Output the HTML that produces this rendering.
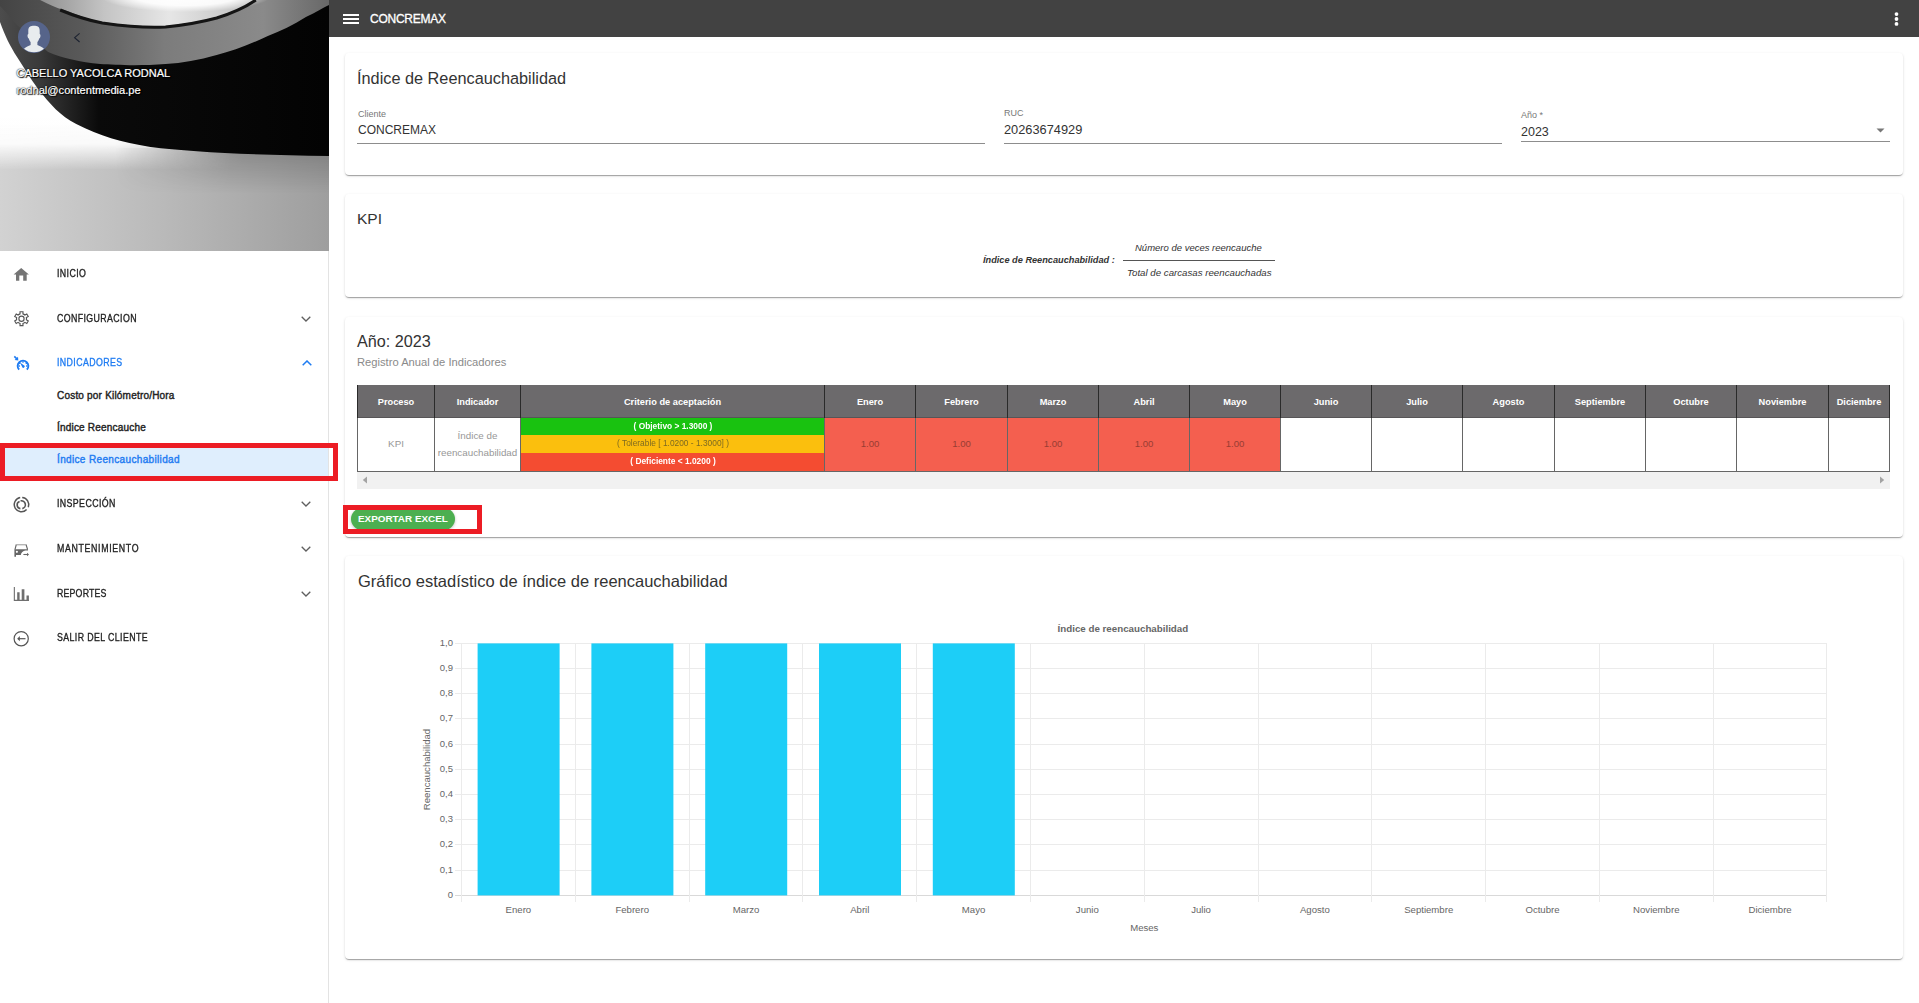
<!DOCTYPE html>
<html><head><meta charset="utf-8">
<style>
*{margin:0;padding:0;box-sizing:border-box}
html,body{width:1919px;height:1003px;overflow:hidden;background:#fff;font-family:"Liberation Sans",sans-serif;color:rgba(0,0,0,.87)}
.a{position:absolute}
.t{position:absolute;white-space:nowrap;line-height:1}
#side{position:absolute;left:0;top:0;width:329px;height:1003px;background:#fff;border-right:1px solid #e3e3e3}
#top{position:absolute;left:329px;top:0;width:1590px;height:37px;background:#424242}
.card{position:absolute;left:345px;width:1558px;background:#fff;border-radius:4px;box-shadow:0 2px 1px -1px rgba(0,0,0,.2),0 1px 1px 0 rgba(0,0,0,.14),0 1px 3px 0 rgba(0,0,0,.12)}
.menu{font-size:10px;color:#222;-webkit-text-stroke:.32px #222;letter-spacing:.45px;transform:scaleX(.88);transform-origin:0 0}
.sub{font-size:10px;color:#222;-webkit-text-stroke:.4px #222;letter-spacing:.2px}
.ico{position:absolute;left:13px;width:17px;height:17px}
.th{font-size:9.25px;font-weight:bold;color:#fff;text-align:center}
.td{font-size:9.8px;color:#979797;text-align:center}
.cr{font-size:9px;text-align:center;transform:scaleX(.93)}
.tv{font-size:9.6px;color:#983d33;text-align:center}
.chev{position:absolute;left:301px;width:10px;height:6px}
</style></head><body>
<div id="side">
  
<svg class="a" style="left:0;top:0" width="329" height="251" viewBox="0 0 328 251" preserveAspectRatio="none">
<defs>
<linearGradient id="fl" x1="0" y1="0" x2="1" y2="0"><stop offset="0" stop-color="#d2d2d2"/><stop offset=".5" stop-color="#b9b9b9"/><stop offset="1" stop-color="#9e9e9e"/></linearGradient>
<linearGradient id="fw" x1="0" y1="0" x2="0" y2="1"><stop offset="0" stop-color="#fff" stop-opacity="1"/><stop offset=".5" stop-color="#fff" stop-opacity=".9"/><stop offset="1" stop-color="#fff" stop-opacity="0"/></linearGradient>
<linearGradient id="fh" x1="0" y1="0" x2="1" y2="0"><stop offset="0" stop-color="#fff"/><stop offset=".35" stop-color="#fff"/><stop offset=".75" stop-color="#000"/></linearGradient>
<mask id="mk"><rect x="0" y="0" width="328" height="251" fill="url(#fh)"/></mask>
<linearGradient id="hz" x1="0" y1="0" x2="0" y2="1"><stop offset="0" stop-color="#000" stop-opacity=".2"/><stop offset="1" stop-color="#000" stop-opacity="0"/></linearGradient>
<linearGradient id="hzm" x1="0" y1="0" x2="1" y2="0"><stop offset="0" stop-color="#000"/><stop offset=".35" stop-color="#000"/><stop offset=".7" stop-color="#fff"/></linearGradient>
<mask id="mk2"><rect x="0" y="0" width="328" height="251" fill="url(#hzm)"/></mask>
<linearGradient id="rim" x1="0" y1="0" x2="1" y2="0"><stop offset="0" stop-color="#909090"/><stop offset=".3" stop-color="#c4c4c4"/><stop offset=".6" stop-color="#e6e6e6"/><stop offset="1" stop-color="#bdbdbd"/></linearGradient>
<linearGradient id="sw" x1="0" y1="0" x2="1" y2="0"><stop offset="0" stop-color="#444"/><stop offset=".25" stop-color="#595959"/><stop offset=".5" stop-color="#7c7c7c"/><stop offset=".8" stop-color="#8a8a8a"/><stop offset="1" stop-color="#686868"/></linearGradient>
<radialGradient id="hl"><stop offset="0" stop-color="#fff"/><stop offset=".6" stop-color="#fff" stop-opacity=".9"/><stop offset="1" stop-color="#fff" stop-opacity="0"/></radialGradient>
<linearGradient id="tr" x1="0" y1="0" x2="1" y2="0"><stop offset="0" stop-color="#4c4c4c"/><stop offset=".12" stop-color="#3a3a3a"/><stop offset=".3" stop-color="#0a0a0a"/><stop offset="1" stop-color="#030303"/></linearGradient>
</defs>
<rect x="0" y="0" width="328" height="251" fill="#fff"/>
<rect x="0" y="125" width="328" height="126" fill="url(#fl)"/>
<rect x="0" y="118" width="328" height="52" fill="url(#fw)" mask="url(#mk)"/>
<rect x="0" y="148" width="328" height="45" fill="url(#hz)" mask="url(#mk2)"/>
<!-- tire body -->
<path d="M0 22 C5 36 10 46 17 57 C24 68 30 78 38 89 C50 104 60 116 76 124 C100 136 120 142 150 147 C190 152 250 155 328 156 L328 0 L0 0 Z" fill="url(#tr)"/>
<!-- sidewall -->
<path d="M0 0 L328 0 L328 5 C318 10 312 14 305 17 C292 25 280 31 267 36 C248 45 232 51 216 55 C198 60 182 63 165 64 C140 66 115 65 100 64 C80 62 62 58 48 52 C36 42 24 32 16 24 C10 17 5 11 0 6 Z" fill="url(#sw)"/>
<!-- rim interior light -->
<path d="M40 0 C48 4 56 8 64 10 C78 15 90 20 102 22 C130 26 150 27 165 26 C185 24 205 20 216 17 C232 12 245 6 254 0 Z" fill="url(#rim)"/>
<ellipse cx="185" cy="-4" rx="85" ry="16" fill="url(#hl)"/>
<!-- rim dark line -->
<path d="M60 10 C72 15 86 20 102 23 C130 27 150 28 165 27 C185 25 205 21 216 18 C232 13 245 7 255 0" fill="none" stroke="#151515" stroke-width="3"/>
</svg>
<!--HEADER-->
  <svg class="a" style="left:18px;top:21px" width="32" height="32" viewBox="0 0 32 32"><circle cx="16" cy="16" r="16" fill="#56648a"/><path d="M16 4.8C12.5 4.8 10.3 5.8 10.3 9.5V13C9.6 13.2 9.4 14 9.6 15.5 9.8 16.8 10.3 17.3 10.8 17.4 11.3 19 12 20.5 12.6 21V24C10.5 25 8 26 6 27.8A16 16 0 0 0 26 27.8C24 26 21.5 25 19.4 24V21C20 20.5 20.7 19 21.2 17.4 21.7 17.3 22.2 16.8 22.4 15.5 22.6 14 22.4 13.2 21.7 13V9.5C21.7 5.8 19.5 4.8 16 4.8Z" fill="#e8ecee"/></svg>
<svg class="a" style="left:73px;top:33px" width="8" height="10" viewBox="0 0 8 10"><path d="M6.6 .4L1.6 4.7 6.6 9" fill="none" stroke="#1c2230" stroke-width="1.1"/></svg>
<div class="t" style="left:16.5px;top:68px;font-size:11px;color:#fff;-webkit-text-stroke:.2px #fff;text-shadow:0 0 1.5px #000,0 0 1px #000,1px 1px 1px #000">CABELLO YACOLCA RODNAL</div>
<div class="t" style="left:16.5px;top:85px;font-size:11.1px;color:#fff;-webkit-text-stroke:.2px #fff;text-shadow:0 0 1.5px #000,0 0 1px #000,1px 1px 1px #000">rodnal@contentmedia.pe</div>

<svg class="a" style="left:10px;top:262px" width="24" height="24" viewBox="0 0 24 24"><path d="M3.6 12.4L11.2 6l7.7 6.4h-2.2v6.3h-3.5v-5.3H9.3v5.3H6v-6.3z" fill="#757575"/></svg>
<div class="t menu" style="left:57px;top:269px">INICIO</div>

<svg class="a" style="left:10px;top:307px" width="24" height="24" viewBox="0 0 24 24"><path d="M10.04 6.92 L10.02 4.76 L12.98 4.76 L12.96 6.92 A5.00 5.00 0 0 1 14.91 8.04 L16.78 6.95 L18.25 9.51 L16.37 10.58 A5.00 5.00 0 0 1 16.37 12.82 L18.25 13.89 L16.78 16.45 L14.91 15.36 A5.00 5.00 0 0 1 12.96 16.48 L12.98 18.64 L10.02 18.64 L10.04 16.48 A5.00 5.00 0 0 1 8.09 15.36 L6.22 16.45 L4.75 13.89 L6.63 12.82 A5.00 5.00 0 0 1 6.63 10.58 L4.75 9.51 L6.22 6.95 L8.09 8.04 A5.00 5.00 0 0 1 10.04 6.92 Z" fill="none" stroke="#555" stroke-width="1.15" stroke-linejoin="miter"/><circle cx="11.5" cy="11.7" r="2.6" fill="none" stroke="#555" stroke-width="1.15"/></svg>
<div class="t menu" style="left:57px;top:314px">CONFIGURACION</div>
<svg class="chev" style="top:316px" viewBox="0 0 10 6"><path d="M.7 .7L5 5 9.3 .7" fill="none" stroke="#5f5f5f" stroke-width="1.3"/></svg>

<svg class="a" style="left:10px;top:350px" width="24" height="24" viewBox="0 0 24 24"><path d="M9.1 19.6A5.3 5.3 0 1 1 16.9 19.6" fill="none" stroke="#1f7cf2" stroke-width="2"/><path d="M13 11.2v1.6M9.2 12.9l1 1M16.8 12.9l-1 1M8.4 16h1.5M17.6 16h-1.5" stroke="#1f7cf2" stroke-width="1.3"/><path d="M10 12.6L13.8 15.2A1.3 1.3 0 1 1 12.2 17z" fill="#1f7cf2"/><path d="M4.3 6.4L7.4 9.4" stroke="#1f7cf2" stroke-width="1.6"/><path d="M8.3 10.4L4.6 10l3.4-3.3z" fill="#1f7cf2"/></svg>
<div class="t menu" style="left:57px;top:358px;color:#1f7cf2;-webkit-text-stroke-color:#1f7cf2">INDICADORES</div>
<svg class="chev" style="top:360px;left:302px" viewBox="0 0 10 6"><path d="M.7 5.3L5 1 9.3 5.3" fill="none" stroke="#1f7cf2" stroke-width="1.5"/></svg>

<div class="t sub" style="left:57px;top:390.5px">Costo por Kilómetro/Hora</div>
<div class="t sub" style="left:57px;top:422.5px">Índice Reencauche</div>
<div class="a" style="left:0;top:444px;width:328px;height:36px;background:#dfeefd"></div>
<div class="t sub" style="left:57px;top:454.5px;color:#1f7cf2;-webkit-text-stroke-color:#1f7cf2;letter-spacing:.35px">Índice Reencauchabilidad</div>
<div class="a" style="left:0;top:443px;width:338px;height:38px;border:5px solid #ec1c24"></div>

<svg class="a" style="left:10px;top:493px" width="24" height="24" viewBox="0 0 24 24"><path d="M10.2 4.6A7.1 7.1 0 1 0 16.6 16.4" fill="none" stroke="#555" stroke-width="1.5"/><path d="M12.2 4.6A7.1 7.1 0 0 1 18.3 14.2" fill="none" stroke="#555" stroke-width="1.5"/><path d="M10.4 15.6A3.6 3.6 0 0 1 9.6 8.6" fill="none" stroke="#555" stroke-width="1.6"/><path d="M10.6 7.9A3.6 3.6 0 0 1 12.3 15.6" fill="none" stroke="#555" stroke-width="1.6"/></svg>
<div class="t menu" style="left:57px;top:499px">INSPECCIÓN</div>
<svg class="chev" style="top:501px" viewBox="0 0 10 6"><path d="M.7 .7L5 5 9.3 .7" fill="none" stroke="#5f5f5f" stroke-width="1.3"/></svg>

<svg class="a" style="left:10px;top:538px" width="24" height="24" viewBox="0 0 24 24"><path d="M6.5 6.7h9.3" stroke="#b5b5b5" stroke-width="1.4"/><path d="M6.3 6.5L5 11.5M16 6.5l1.6 5" stroke="#666" stroke-width="1.1"/><path d="M4.4 11.2h13.6v1.3h-2.6c-2.4.3-4.2 2-4.6 4.4H6v1.9H4.4zM6.9 12.8a1 1 0 1 0 0 2.1 1 1 0 1 0 0-2.1z" fill="#666" fill-rule="evenodd"/><path d="M13.4 16.5h3.8" stroke="#666" stroke-width="1.1"/><path d="M17 14.8l2 1.7-2 1.7z" fill="#666"/></svg>
<div class="t menu" style="left:57px;top:544px;letter-spacing:.75px">MANTENIMIENTO</div>
<svg class="chev" style="top:546px" viewBox="0 0 10 6"><path d="M.7 .7L5 5 9.3 .7" fill="none" stroke="#5f5f5f" stroke-width="1.3"/></svg>

<svg class="a" style="left:10px;top:582px" width="24" height="24" viewBox="0 0 24 24"><path d="M3.8 5h1.1v12.8H19v1.1H3.8z" fill="#6f6f6f"/><path d="M7.2 10.3h2.4V18H7.2zM11.7 7.2h2.7V18h-2.7zM16.5 13.6h2.4V18h-2.4z" fill="#6f6f6f"/></svg>
<div class="t menu" style="left:57px;top:589px;letter-spacing:.2px">REPORTES</div>
<svg class="chev" style="top:591px" viewBox="0 0 10 6"><path d="M.7 .7L5 5 9.3 .7" fill="none" stroke="#5f5f5f" stroke-width="1.3"/></svg>

<svg class="a" style="left:10px;top:626px" width="24" height="24" viewBox="0 0 24 24"><circle cx="11.2" cy="12.7" r="7.1" fill="none" stroke="#555" stroke-width="1.2"/><path d="M15.5 12.7H8.6" stroke="#555" stroke-width="1.2"/><path d="M7.2 12.7l2.6-2.6v5.2z" fill="#555"/></svg>
<div class="t menu" style="left:57px;top:633px">SALIR DEL CLIENTE</div>
<!--MENU-->
</div>
<div id="top">
  <svg class="a" style="left:14px;top:13px" width="16" height="12" viewBox="0 0 16 12"><path d="M0 1h16v2H0zM0 5h16v2H0zM0 9h16v2H0z" fill="#fff"/></svg>
<div class="t" style="left:41px;top:13px;font-size:12px;color:#fff;-webkit-text-stroke:.3px #fff;letter-spacing:-.25px">CONCREMAX</div>
<svg class="a" style="left:1565px;top:12px" width="5" height="14" viewBox="0 0 5 14"><circle cx="2.5" cy="2.1" r="1.9" fill="#fff"/><circle cx="2.5" cy="7" r="1.9" fill="#fff"/><circle cx="2.5" cy="11.9" r="1.9" fill="#fff"/></svg>
<!--TOPBAR-->
</div>
<div class="card" style="top:53px;height:122px"></div>
<div class="card" style="top:194px;height:103px"></div>
<div class="card" style="top:317px;height:220px"></div>
<div class="card" style="top:556px;height:403px"></div>
<!-- card1 -->
<div class="t" style="left:357px;top:70px;font-size:16.3px;color:#333">Índice de Reencauchabilidad</div>
<div class="t" style="left:358px;top:110px;font-size:9px;color:#777">Cliente</div>
<div class="t" style="left:358px;top:124px;font-size:12px;color:#333">CONCREMAX</div>
<div class="a" style="left:357px;top:143px;width:628px;height:1px;background:#8d8d8d"></div>
<div class="t" style="left:1004px;top:109px;font-size:9px;color:#777">RUC</div>
<div class="t" style="left:1004px;top:124px;font-size:12.8px;color:#333">20263674929</div>
<div class="a" style="left:1004px;top:143px;width:498px;height:1px;background:#8d8d8d"></div>
<div class="t" style="left:1521px;top:111px;font-size:9px;color:#777">Año *</div>
<div class="t" style="left:1521px;top:126px;font-size:12.5px;color:#333">2023</div>
<div class="a" style="left:1521px;top:141px;width:369px;height:1px;background:#8d8d8d"></div>
<svg class="a" style="left:1876px;top:128px" width="9" height="5" viewBox="0 0 9 5"><path d="M.5 .5h8L4.5 4.5z" fill="#777"/></svg>
<!-- card2 -->
<div class="t" style="left:357px;top:211px;font-size:15.5px;color:#333">KPI</div>
<div class="t" style="left:983px;top:256px;font-size:9.2px;font-weight:bold;font-style:italic;color:#333">Índice de Reencauchabilidad :</div>
<div class="t" style="left:1135px;top:243px;font-size:9.5px;font-style:italic;color:#333">Número de veces reencauche</div>
<div class="a" style="left:1123px;top:260px;width:152px;height:1px;background:#555"></div>
<div class="t" style="left:1127px;top:268px;font-size:9.7px;font-style:italic;color:#333">Total de carcasas reencauchadas</div>
<!-- card3 -->
<div class="t" style="left:357px;top:333px;font-size:16.2px;color:#333">Año: 2023</div>
<div class="t" style="left:357px;top:357px;font-size:11.2px;color:#8a8a8a">Registro Anual de Indicadores</div>
<div class="a" style="left:357px;top:385px;width:1533px;height:104px;overflow:hidden">
<div class="a" style="left:0;top:0;width:1533px;height:33px;background:#6c6a6c"></div>
<div class="a" style="left:467px;top:33px;width:91px;height:53px;background:#f45f4f"></div>
<div class="a" style="left:558px;top:33px;width:92px;height:53px;background:#f45f4f"></div>
<div class="a" style="left:650px;top:33px;width:91px;height:53px;background:#f45f4f"></div>
<div class="a" style="left:741px;top:33px;width:91px;height:53px;background:#f45f4f"></div>
<div class="a" style="left:832px;top:33px;width:91px;height:53px;background:#f45f4f"></div>
<div class="a" style="left:163px;top:33px;width:304px;height:17px;background:#19c210"></div>
<div class="a" style="left:163px;top:50px;width:304px;height:18px;background:#fbbf0d"></div>
<div class="a" style="left:163px;top:68px;width:304px;height:18px;background:#f44c31"></div>
<div class="a" style="left:0;top:32px;width:1533px;height:1px;background:#575557"></div>
<div class="a" style="left:0;top:86px;width:1533px;height:1px;background:#666"></div>
<div class="a" style="left:0px;top:0;width:1px;height:33px;background:#2a2a2a"></div>
<div class="a" style="left:0px;top:33px;width:1px;height:54px;background:#666"></div>
<div class="a" style="left:77px;top:0;width:1px;height:33px;background:#2a2a2a"></div>
<div class="a" style="left:77px;top:33px;width:1px;height:54px;background:#666"></div>
<div class="a" style="left:163px;top:0;width:1px;height:33px;background:#2a2a2a"></div>
<div class="a" style="left:163px;top:33px;width:1px;height:54px;background:#666"></div>
<div class="a" style="left:467px;top:0;width:1px;height:33px;background:#2a2a2a"></div>
<div class="a" style="left:467px;top:33px;width:1px;height:54px;background:#666"></div>
<div class="a" style="left:558px;top:0;width:1px;height:33px;background:#2a2a2a"></div>
<div class="a" style="left:558px;top:33px;width:1px;height:54px;background:#666"></div>
<div class="a" style="left:650px;top:0;width:1px;height:33px;background:#2a2a2a"></div>
<div class="a" style="left:650px;top:33px;width:1px;height:54px;background:#666"></div>
<div class="a" style="left:741px;top:0;width:1px;height:33px;background:#2a2a2a"></div>
<div class="a" style="left:741px;top:33px;width:1px;height:54px;background:#666"></div>
<div class="a" style="left:832px;top:0;width:1px;height:33px;background:#2a2a2a"></div>
<div class="a" style="left:832px;top:33px;width:1px;height:54px;background:#666"></div>
<div class="a" style="left:923px;top:0;width:1px;height:33px;background:#2a2a2a"></div>
<div class="a" style="left:923px;top:33px;width:1px;height:54px;background:#666"></div>
<div class="a" style="left:1014px;top:0;width:1px;height:33px;background:#2a2a2a"></div>
<div class="a" style="left:1014px;top:33px;width:1px;height:54px;background:#666"></div>
<div class="a" style="left:1105px;top:0;width:1px;height:33px;background:#2a2a2a"></div>
<div class="a" style="left:1105px;top:33px;width:1px;height:54px;background:#666"></div>
<div class="a" style="left:1197px;top:0;width:1px;height:33px;background:#2a2a2a"></div>
<div class="a" style="left:1197px;top:33px;width:1px;height:54px;background:#666"></div>
<div class="a" style="left:1288px;top:0;width:1px;height:33px;background:#2a2a2a"></div>
<div class="a" style="left:1288px;top:33px;width:1px;height:54px;background:#666"></div>
<div class="a" style="left:1379px;top:0;width:1px;height:33px;background:#2a2a2a"></div>
<div class="a" style="left:1379px;top:33px;width:1px;height:54px;background:#666"></div>
<div class="a" style="left:1471px;top:0;width:1px;height:33px;background:#2a2a2a"></div>
<div class="a" style="left:1471px;top:33px;width:1px;height:54px;background:#666"></div>
<div class="a" style="left:1532px;top:0;width:1px;height:33px;background:#2a2a2a"></div>
<div class="a" style="left:1532px;top:33px;width:1px;height:54px;background:#666"></div>
<div class="t th" style="left:-21.0px;top:13px;width:120px">Proceso</div>
<div class="t th" style="left:60.5px;top:13px;width:120px">Indicador</div>
<div class="t th" style="left:255.5px;top:13px;width:120px">Criterio de aceptación</div>
<div class="t th" style="left:453.0px;top:13px;width:120px">Enero</div>
<div class="t th" style="left:544.5px;top:13px;width:120px">Febrero</div>
<div class="t th" style="left:636.0px;top:13px;width:120px">Marzo</div>
<div class="t th" style="left:727.0px;top:13px;width:120px">Abril</div>
<div class="t th" style="left:818.0px;top:13px;width:120px">Mayo</div>
<div class="t th" style="left:909.0px;top:13px;width:120px">Junio</div>
<div class="t th" style="left:1000.0px;top:13px;width:120px">Julio</div>
<div class="t th" style="left:1091.5px;top:13px;width:120px">Agosto</div>
<div class="t th" style="left:1183.0px;top:13px;width:120px">Septiembre</div>
<div class="t th" style="left:1274.0px;top:13px;width:120px">Octubre</div>
<div class="t th" style="left:1365.5px;top:13px;width:120px">Noviembre</div>
<div class="t th" style="left:1442.0px;top:13px;width:120px">Diciembre</div>
<div class="t td" style="left:-1.0px;top:54px;width:80px;margin-top:.3px">KPI</div>
<div class="t td" style="left:70.5px;top:46px;width:100px">Índice de</div>
<div class="t td" style="left:70.5px;top:63px;width:100px">reencauchabilidad</div>
<div class="t cr" style="left:215.5px;top:37px;width:200px;font-weight:bold;color:#fff">( Objetivo &gt; 1.3000 )</div>
<div class="t cr" style="left:215.5px;top:54px;width:200px;color:#7d6a22">( Tolerable [ 1.0200 - 1.3000] )</div>
<div class="t cr" style="left:215.5px;top:72px;width:200px;font-weight:bold;color:#fff">( Deficiente &lt; 1.0200 )</div>
<div class="t tv" style="top:54px;left:483.0px;width:60px">1.00</div>
<div class="t tv" style="top:54px;left:574.5px;width:60px">1.00</div>
<div class="t tv" style="top:54px;left:666.0px;width:60px">1.00</div>
<div class="t tv" style="top:54px;left:757.0px;width:60px">1.00</div>
<div class="t tv" style="top:54px;left:848.0px;width:60px">1.00</div>
<div class="a" style="left:0;top:87px;width:1533px;height:17px;background:#f1f1f1"></div>
<svg class="a" style="left:5px;top:91px" width="6" height="8" viewBox="0 0 6 8"><path d="M5 .5v7L.8 4z" fill="#a3a3a3"/></svg>
<svg class="a" style="left:1522px;top:91px" width="6" height="8" viewBox="0 0 6 8"><path d="M1 .5v7L5.2 4z" fill="#a3a3a3"/></svg>
</div>
<div class="a" style="left:351px;top:508px;width:104px;height:22px;border-radius:11px;background:#4caf50;box-shadow:0 1px 3px rgba(0,0,0,.25)"></div>
<div class="t" style="left:358px;top:514px;font-size:9.9px;font-weight:bold;color:#fff">EXPORTAR EXCEL</div>
<div class="a" style="left:343px;top:505px;width:139px;height:29px;border:5px solid #ec1c24"></div>
<div class="t" style="left:358px;top:572.5px;font-size:16.5px;color:#333">Gráfico estadístico de índice de reencauchabilidad</div>
<svg class="a" style="left:0;top:0" width="1919" height="1003" viewBox="0 0 1919 1003" font-family="Liberation Sans">
<rect x="455" y="895" width="1372" height="1" fill="#d9d9d9"/>
<rect x="455" y="870" width="1372" height="1" fill="#ebebeb"/>
<rect x="455" y="844" width="1372" height="1" fill="#ebebeb"/>
<rect x="455" y="819" width="1372" height="1" fill="#ebebeb"/>
<rect x="455" y="794" width="1372" height="1" fill="#ebebeb"/>
<rect x="455" y="769" width="1372" height="1" fill="#ebebeb"/>
<rect x="455" y="744" width="1372" height="1" fill="#ebebeb"/>
<rect x="455" y="718" width="1372" height="1" fill="#ebebeb"/>
<rect x="455" y="693" width="1372" height="1" fill="#ebebeb"/>
<rect x="455" y="668" width="1372" height="1" fill="#ebebeb"/>
<rect x="455" y="643" width="1372" height="1" fill="#ebebeb"/>
<rect x="461" y="643" width="1" height="259" fill="#ebebeb"/>
<rect x="575" y="643" width="1" height="259" fill="#ebebeb"/>
<rect x="689" y="643" width="1" height="259" fill="#ebebeb"/>
<rect x="802" y="643" width="1" height="259" fill="#ebebeb"/>
<rect x="916" y="643" width="1" height="259" fill="#ebebeb"/>
<rect x="1030" y="643" width="1" height="259" fill="#ebebeb"/>
<rect x="1144" y="643" width="1" height="259" fill="#ebebeb"/>
<rect x="1258" y="643" width="1" height="259" fill="#ebebeb"/>
<rect x="1371" y="643" width="1" height="259" fill="#ebebeb"/>
<rect x="1485" y="643" width="1" height="259" fill="#ebebeb"/>
<rect x="1599" y="643" width="1" height="259" fill="#ebebeb"/>
<rect x="1713" y="643" width="1" height="259" fill="#ebebeb"/>
<rect x="1826" y="643" width="1" height="259" fill="#ebebeb"/>
<rect x="477.6" y="643.4" width="82" height="252" fill="#1dcef7"/>
<rect x="591.4" y="643.4" width="82" height="252" fill="#1dcef7"/>
<rect x="705.2" y="643.4" width="82" height="252" fill="#1dcef7"/>
<rect x="819.0" y="643.4" width="82" height="252" fill="#1dcef7"/>
<rect x="932.8" y="643.4" width="82" height="252" fill="#1dcef7"/>
<text x="453" y="897.8" font-size="9.5" fill="#666" text-anchor="end">0</text>
<text x="453" y="872.6" font-size="9.5" fill="#666" text-anchor="end">0,1</text>
<text x="453" y="847.4" font-size="9.5" fill="#666" text-anchor="end">0,2</text>
<text x="453" y="822.2" font-size="9.5" fill="#666" text-anchor="end">0,3</text>
<text x="453" y="797.0" font-size="9.5" fill="#666" text-anchor="end">0,4</text>
<text x="453" y="771.8" font-size="9.5" fill="#666" text-anchor="end">0,5</text>
<text x="453" y="746.6" font-size="9.5" fill="#666" text-anchor="end">0,6</text>
<text x="453" y="721.4" font-size="9.5" fill="#666" text-anchor="end">0,7</text>
<text x="453" y="696.2" font-size="9.5" fill="#666" text-anchor="end">0,8</text>
<text x="453" y="671.0" font-size="9.5" fill="#666" text-anchor="end">0,9</text>
<text x="453" y="645.8" font-size="9.5" fill="#666" text-anchor="end">1,0</text>
<text x="518.4" y="913" font-size="9.6" fill="#666" text-anchor="middle">Enero</text>
<text x="632.2" y="913" font-size="9.6" fill="#666" text-anchor="middle">Febrero</text>
<text x="746.0" y="913" font-size="9.6" fill="#666" text-anchor="middle">Marzo</text>
<text x="859.8" y="913" font-size="9.6" fill="#666" text-anchor="middle">Abril</text>
<text x="973.6" y="913" font-size="9.6" fill="#666" text-anchor="middle">Mayo</text>
<text x="1087.3" y="913" font-size="9.6" fill="#666" text-anchor="middle">Junio</text>
<text x="1201.1" y="913" font-size="9.6" fill="#666" text-anchor="middle">Julio</text>
<text x="1314.9" y="913" font-size="9.6" fill="#666" text-anchor="middle">Agosto</text>
<text x="1428.7" y="913" font-size="9.6" fill="#666" text-anchor="middle">Septiembre</text>
<text x="1542.5" y="913" font-size="9.6" fill="#666" text-anchor="middle">Octubre</text>
<text x="1656.3" y="913" font-size="9.6" fill="#666" text-anchor="middle">Noviembre</text>
<text x="1770.1" y="913" font-size="9.6" fill="#666" text-anchor="middle">Diciembre</text>
<text x="1144.3" y="930.8" font-size="9.6" fill="#666" text-anchor="middle">Meses</text>
<text x="1122.9" y="631.7" font-size="9.75" font-weight="bold" fill="#666" text-anchor="middle">Índice de reencauchabilidad</text>
<text transform="translate(430.3 769.5) rotate(-90)" x="0" y="0" font-size="9.57" fill="#666" text-anchor="middle">Reencauchabilidad</text>
</svg>
<!--CONTENT-->
</body></html>
